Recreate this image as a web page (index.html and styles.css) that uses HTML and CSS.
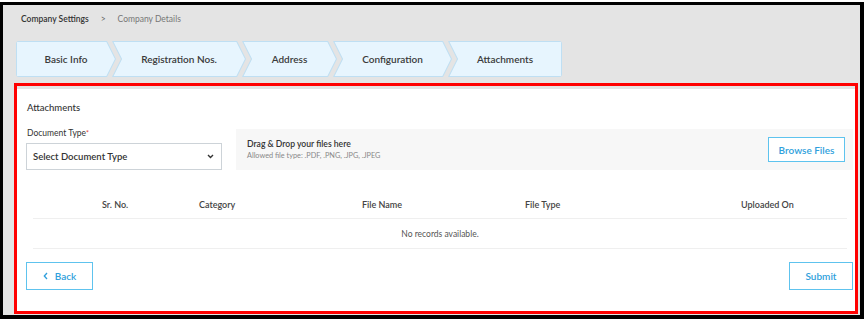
FILE: index.html
```html
<!DOCTYPE html>
<html lang="en">
<head>
  <meta charset="UTF-8" />
  <meta name="viewport" content="width=device-width, initial-scale=1.0" />
  <title>Company Details</title>
  <link rel="stylesheet" href="styles.css">
</head>
<body>
  <div class="frame">
    <nav class="crumbs">
      <span class="crumb-main">Company Settings</span>
      <span class="crumb-sep">&gt;</span>
      <span class="crumb-cur">Company Details</span>
    </nav>

    <div class="steps">
      <div class="step step-first step-basic"><span>Basic Info</span></div>
      <div class="step step-reg"><span>Registration Nos.</span></div>
      <div class="step step-addr"><span>Address</span></div>
      <div class="step step-conf"><span>Configuration</span></div>
      <div class="step step-last step-att"><span>Attachments</span></div>
    </div>

    <div class="panel">
      <div class="card">
        <h3 class="card-title">Attachments</h3>

        <div class="upload-row">
          <div class="doc-type">
            <div class="field-label">Document Type<span class="req">*</span></div>
            <div class="select">
              <span>Select Document Type</span>
              <svg width="7" height="5" viewBox="0 0 7 5"><path d="M1 1l2.5 2.5L6 1" fill="none" stroke="#333" stroke-width="1.4"/></svg>
            </div>
          </div>
          <div class="dropzone">
            <div>
              <div class="drop-title">Drag &amp; Drop your files here</div>
              <div class="drop-hint">Allowed file type: .PDF, .PNG, .JPG, .JPEG</div>
            </div>
            <button class="btn btn-browse">Browse Files</button>
          </div>
        </div>

        <div class="table">
          <div class="table-head">
            <div class="col-first">Sr. No.</div>
            <div>Category</div>
            <div>File Name</div>
            <div>File Type</div>
            <div>Uploaded On</div>
          </div>
          <div class="table-empty">No records available.</div>
        </div>

        <div class="actions">
          <button class="btn btn-back">
            <svg width="5" height="8" viewBox="0 0 5 8"><path d="M4 1L1.3 4 4 7" fill="none" stroke="#2f9fdc" stroke-width="1.3"/></svg>
            Back
          </button>
          <button class="btn btn-submit">Submit</button>
        </div>
      </div>
    </div>
  </div>
</body>
</html>
```

FILE: styles.css
```css
body {
  margin: 0;
  background: #fff;
  font-family: Lato, "Liberation Sans", sans-serif;
  color: #333;
}
.frame {
  box-sizing: border-box;
  margin-top: 2px;
  width: 864px;
  height: 317px;
  border: solid #000;
  border-width: 3px 4px 4px 3px;
  background: #e4e4e4;
  padding-left: 11px;
}

/* breadcrumb */
.crumbs {
  display: flex;
  align-items: center;
  padding: 8px 0 0 7px;
  height: 12px;
  font-size: 8.5px;
}
.crumb-main { font-weight: 600; color: #333; }
.crumb-sep { margin: 0 12px; color: #666; }
.crumb-cur { color: #777; }

/* steps */
.steps {
  display: flex;
  height: 36px;
  margin: 16px 0 0 2px;
}
.step {
  position: relative;
  height: 36px;
  display: flex;
  align-items: center;
  justify-content: center;
  background: #bfdff3;
  font-size: 10px;
  font-weight: 600;
  color: #3a3a3a;
  margin-left: -4px;
  clip-path: polygon(0 0, calc(100% - 9px) 0, 100% 50%, calc(100% - 9px) 100%, 0 100%, 9px 50%);
}
.step::before {
  content: "";
  position: absolute;
  inset: 0;
  background: #e7f5fe;
  clip-path: polygon(1.6px 1px, calc(100% - 9.6px) 1px, calc(100% - 1.1px) 50%, calc(100% - 9.6px) calc(100% - 1px), 1.6px calc(100% - 1px), 10.1px 50%);
}
.step span { position: relative; }
.step-first {
  margin-left: 0;
  border-radius: 3px 0 0 3px;
  clip-path: polygon(0 0, calc(100% - 9px) 0, 100% 50%, calc(100% - 9px) 100%, 0 100%);
}
.step-first::before {
  border-radius: 2px 0 0 2px;
  clip-path: polygon(1px 1px, calc(100% - 9.6px) 1px, calc(100% - 1.1px) 50%, calc(100% - 9.6px) calc(100% - 1px), 1px calc(100% - 1px));
}
.step-last {
  border-radius: 0 3px 3px 0;
  clip-path: polygon(0 0, 100% 0, 100% 100%, 0 100%, 9px 50%);
}
.step-last::before {
  border-radius: 0 2px 2px 0;
  clip-path: polygon(1.6px 1px, calc(100% - 1px) 1px, calc(100% - 1px) calc(100% - 1px), 1.6px calc(100% - 1px), 10.1px 50%);
}
.step-basic { width: 100px; }
.step-reg { width: 134px; }
.step-addr { width: 95px; }
.step-conf { width: 119px; }
.step-att { width: 114px; }

/* red outlined section */
.panel {
  box-sizing: border-box;
  margin-top: 6px;
  width: 844px;
  height: 231px;
  border: 3px solid #f00;
  padding-top: 3px;
  background: #e4e4e4;
}
.card {
  box-sizing: border-box;
  height: 222px;
  background: #fff;
  padding: 12px 2px 0 9px;
}
.card-title {
  margin: 0 0 13px;
  padding-left: 1px;
  font-size: 9.5px;
  line-height: 13px;
  font-weight: 500;
  color: #333;
}

.upload-row {
  display: flex;
  align-items: flex-end;
  gap: 14px;
}
.doc-type { width: 196px; }
.field-label {
  padding-left: 1px;
  margin-bottom: 4px;
  font-size: 8.5px;
  line-height: 12px;
  color: #333;
}
.req { color: #e53935; font-size: 7px; vertical-align: top; }
.select {
  box-sizing: border-box;
  height: 27px;
  border: 1px solid #cdd3d8;
  display: flex;
  align-items: center;
  justify-content: space-between;
  padding: 0 7px 0 6px;
  font-size: 9.5px;
  font-weight: 600;
  color: #333;
}
.dropzone {
  flex: 1;
  box-sizing: border-box;
  height: 41px;
  background: #f7f7f7;
  display: flex;
  align-items: center;
  justify-content: space-between;
  padding: 0 8px 0 11px;
}
.drop-title {
  font-size: 8.6px;
  line-height: 12px;
  font-weight: 600;
  color: #333;
}
.drop-hint {
  font-size: 7.3px;
  line-height: 12px;
  color: #888;
}

.btn {
  box-sizing: border-box;
  border: 1px solid #5ec3ee;
  background: #fff;
  color: #2f9fdc;
  font-family: inherit;
  font-size: 10px;
  font-weight: 600;
  padding: 0;
  cursor: pointer;
}
.btn-browse { width: 77px; height: 25px; }
.btn-back {
  width: 67px;
  height: 28px;
  display: flex;
  align-items: center;
  justify-content: center;
  gap: 7px;
}
.btn-submit { width: 64px; height: 28px; }

/* table */
.table { margin: 20px 6px 0 7px; }
.table-head {
  display: grid;
  grid-template-columns: 166px 163px 163px 216px 1fr;
  align-items: center;
  height: 28px;
  border-bottom: 1px solid #efefef;
  font-size: 9px;
  font-weight: 600;
  color: #444;
}
.col-first { padding-left: 69px; }
.table-empty {
  height: 29px;
  display: flex;
  align-items: center;
  justify-content: center;
  border-bottom: 1px solid #efefef;
  font-size: 8.5px;
  color: #555;
}

.actions {
  display: flex;
  justify-content: space-between;
  margin-top: 13px;
}
```
